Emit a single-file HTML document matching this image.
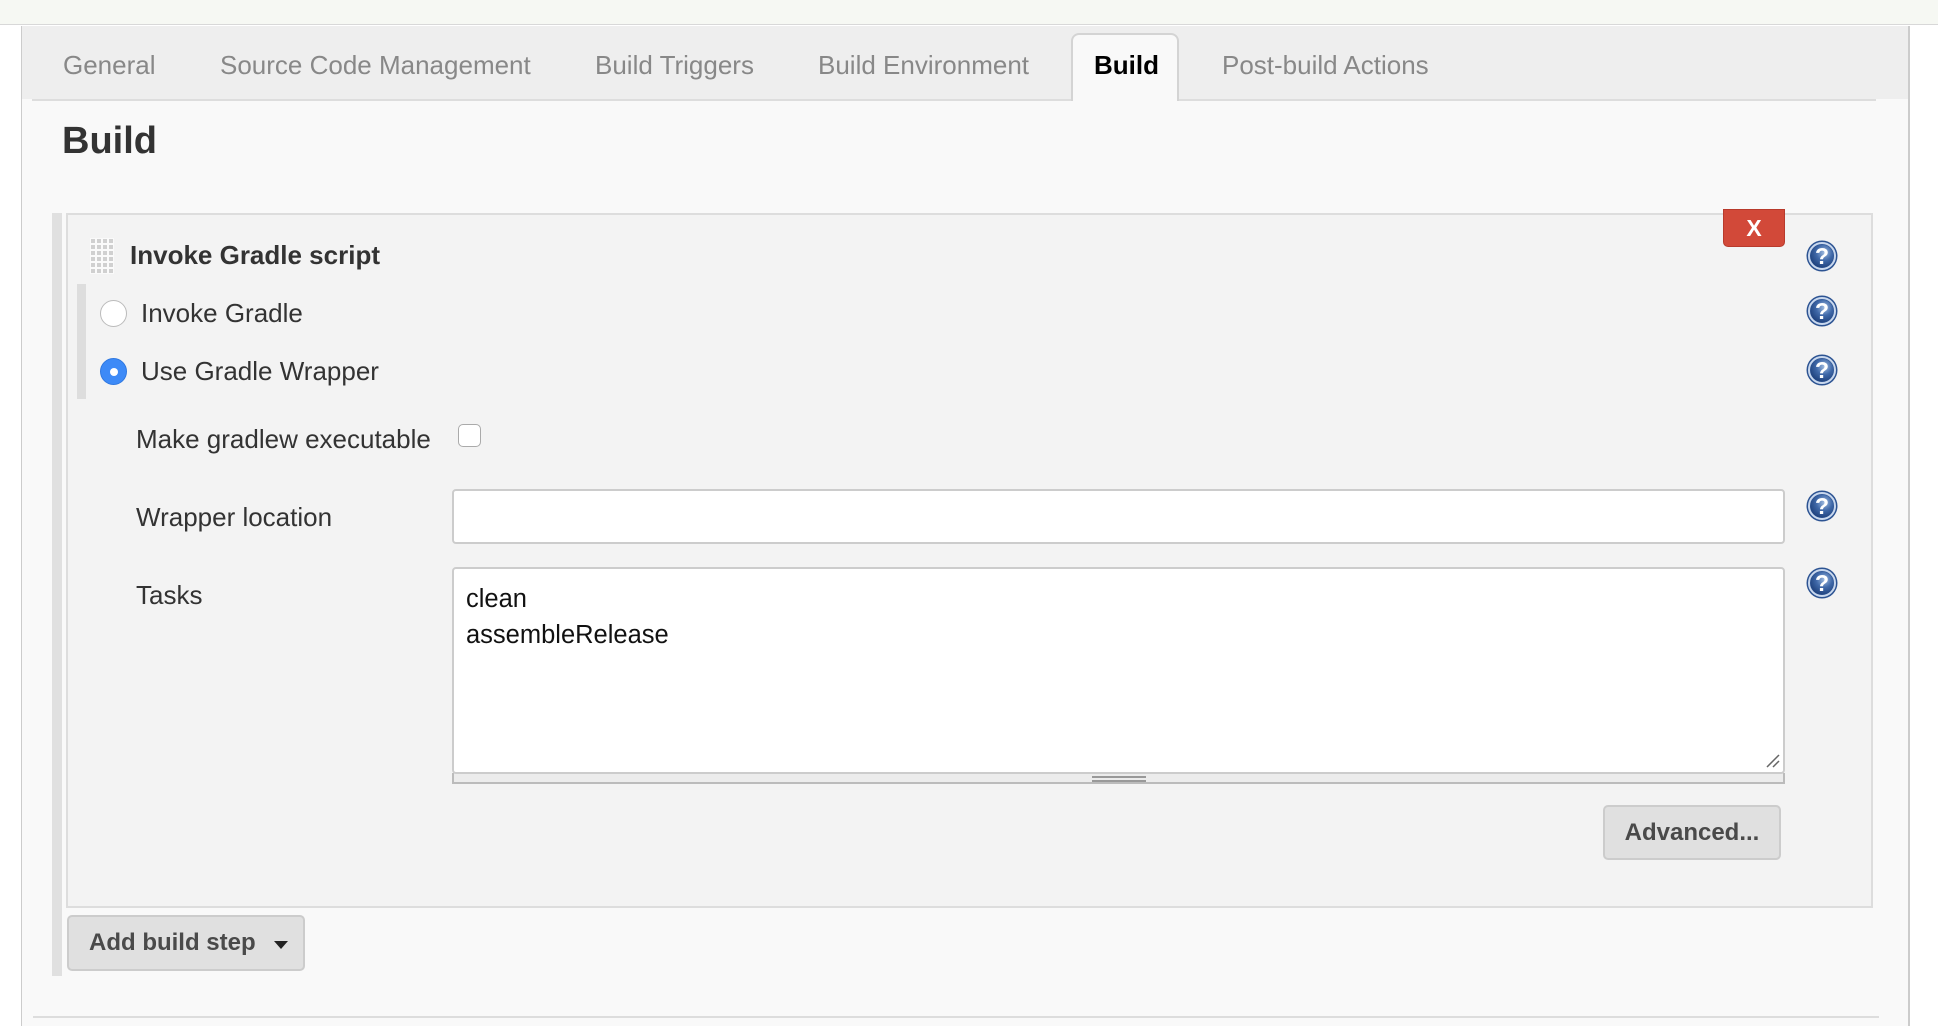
<!DOCTYPE html>
<html><head><meta charset="utf-8">
<style>
*{box-sizing:border-box;margin:0;padding:0}
body{width:1938px;height:1026px;position:relative;background:#fff;font-family:"Liberation Sans",Arial,sans-serif;overflow:hidden;color:#333}
.a{position:absolute}
.topbar{left:0;top:0;width:1938px;height:25px;background:#f6f8f3;border-bottom:1px solid #d8d8d8}
.page{left:21px;top:26px;width:1889px;height:1000px;background:#f9f9f9;border-left:1px solid #ccc;border-right:2px solid #ccc}
.tabbar{left:22px;top:26px;width:1886px;height:73px;background:#eee}
.tabline{left:32px;top:99px;width:1844px;height:2px;background:#ddd}
.tab{top:50px;font-size:26px;color:#888;line-height:30px;white-space:nowrap}
.acttab{left:1071px;top:33px;width:108px;height:68px;background:#f9f9f9;border:2px solid #d4d4d4;border-bottom:none;border-radius:8px 8px 0 0}
h1{position:absolute;left:62px;top:119px;font-size:38px;font-weight:bold;color:#333;line-height:44px}
.obar{left:52px;top:213px;width:10px;height:763px;background:#e0e0e0}
.box{left:66px;top:213px;width:1807px;height:695px;background:#f3f3f3;border:2px solid #ddd}
.ibar{left:77px;top:284px;width:9px;height:115px;background:#ddd}
.lbl{font-size:26px;line-height:30px;color:#333;white-space:nowrap}
.xbtn{left:1723px;top:209px;width:62px;height:38px;background:#d24939;border:1px solid #b83a2c;border-radius:0 0 5px 5px;color:#fff;font-weight:bold;font-size:23px;text-align:center;line-height:36px}
.help{position:absolute;width:32px;height:32px}
.radio{width:27px;height:27px;border-radius:50%}
.input{background:#fff;border:2px solid #ccc;border-radius:4px}
.btn{background:#e0e0e0;border:2px solid #ccc;border-radius:5px;font-weight:bold;font-size:24px;color:#4a4a4a;line-height:52px}
</style></head><body>
<div class="a topbar"></div>
<div class="a page"></div>
<div class="a tabbar"></div>
<div class="a tabline"></div>
<div class="a acttab"></div>
<div class="a tab" style="left:63px">General</div>
<div class="a tab" style="left:220px">Source Code Management</div>
<div class="a tab" style="left:595px">Build Triggers</div>
<div class="a tab" style="left:818px">Build Environment</div>
<div class="a tab" style="left:1094px;color:#000;font-weight:bold">Build</div>
<div class="a tab" style="left:1222px">Post-build Actions</div>
<h1>Build</h1>
<div class="a obar"></div>
<div class="a box"></div>
<div class="a xbtn">X</div>
<svg class="a" style="left:90px;top:238px" width="24" height="36">
<defs><pattern id="p" width="6" height="6" patternUnits="userSpaceOnUse"><rect x="1" y="1" width="4" height="4" fill="#d0d0d0"/></pattern></defs>
<rect width="24" height="36" fill="#fafafa"/><rect width="24" height="36" fill="url(#p)"/></svg>
<div class="a lbl" style="left:130px;top:240px;font-size:26px;font-weight:bold;color:#333">Invoke Gradle script</div>
<div class="a ibar"></div>
<div class="a radio" style="left:100px;top:300px;background:#fff;border:1px solid #bbb"></div>
<div class="a lbl" style="left:141px;top:298px">Invoke Gradle</div>
<div class="a radio" style="left:100px;top:358px;background:#3d8af7;border:1px solid #2f78e0"><div style="position:absolute;left:9px;top:9px;width:8px;height:8px;border-radius:50%;background:#fff"></div></div>
<div class="a lbl" style="left:141px;top:356px">Use Gradle Wrapper</div>
<div class="a lbl" style="left:136px;top:424px">Make gradlew executable</div>
<div class="a" style="left:458px;top:424px;width:23px;height:23px;background:#fff;border:1px solid #aaa;border-radius:5px"></div>
<div class="a lbl" style="left:136px;top:502px">Wrapper location</div>
<div class="a input" style="left:452px;top:489px;width:1333px;height:55px"></div>
<div class="a lbl" style="left:136px;top:580px">Tasks</div>
<div class="a" style="left:452px;top:773px;width:1333px;height:11px;background:#ececec;border:2px solid #bbb;border-top:none"></div>
<div class="a" style="left:1092px;top:776px;width:54px;height:2px;background:#999"></div>
<div class="a" style="left:1092px;top:780px;width:54px;height:2px;background:#999"></div>
<div class="a input" style="left:452px;top:567px;width:1333px;height:207px;font-size:25.5px;line-height:36px;color:#111;padding:12px 0 0 12px">clean<br>assembleRelease</div>
<svg class="a" style="left:1765px;top:753px" width="16" height="16"><path d="M2 14L14 2M8 14L14 8" stroke="#666" stroke-width="1.5"/></svg>
<div class="a btn" style="left:1603px;top:805px;width:178px;height:55px;text-align:center">Advanced...</div>
<div class="a btn" style="left:67px;top:915px;width:238px;height:56px;padding-left:20px">Add build step<span style="position:absolute;left:205px;top:24px;width:0;height:0;border-left:7px solid transparent;border-right:7px solid transparent;border-top:8px solid #222"></span></div>
<div class="a" style="left:33px;top:1016px;width:1846px;height:2px;background:#ddd"></div>
<svg width="0" height="0" style="position:absolute"><defs><radialGradient id="g" cx="0.6" cy="0.35" r="0.7"><stop offset="0" stop-color="#9fbbe0"/><stop offset="0.5" stop-color="#3f68a8"/><stop offset="1" stop-color="#1d3f7a"/></radialGradient></defs></svg>
<svg class="help" style="left:1806px;top:240px" viewBox="0 0 32 32"><circle cx="16" cy="16" r="15.5" fill="#2c5392"/><circle cx="16" cy="16" r="13" fill="none" stroke="#c9d8ee" stroke-width="2"/><circle cx="16" cy="16" r="11.5" fill="url(#g)"/><text x="16" y="24" text-anchor="middle" font-family="Liberation Sans" font-weight="bold" font-size="23" fill="#fff">?</text></svg>
<svg class="help" style="left:1806px;top:295px" viewBox="0 0 32 32"><circle cx="16" cy="16" r="15.5" fill="#2c5392"/><circle cx="16" cy="16" r="13" fill="none" stroke="#c9d8ee" stroke-width="2"/><circle cx="16" cy="16" r="11.5" fill="url(#g)"/><text x="16" y="24" text-anchor="middle" font-family="Liberation Sans" font-weight="bold" font-size="23" fill="#fff">?</text></svg>
<svg class="help" style="left:1806px;top:354px" viewBox="0 0 32 32"><circle cx="16" cy="16" r="15.5" fill="#2c5392"/><circle cx="16" cy="16" r="13" fill="none" stroke="#c9d8ee" stroke-width="2"/><circle cx="16" cy="16" r="11.5" fill="url(#g)"/><text x="16" y="24" text-anchor="middle" font-family="Liberation Sans" font-weight="bold" font-size="23" fill="#fff">?</text></svg>
<svg class="help" style="left:1806px;top:490px" viewBox="0 0 32 32"><circle cx="16" cy="16" r="15.5" fill="#2c5392"/><circle cx="16" cy="16" r="13" fill="none" stroke="#c9d8ee" stroke-width="2"/><circle cx="16" cy="16" r="11.5" fill="url(#g)"/><text x="16" y="24" text-anchor="middle" font-family="Liberation Sans" font-weight="bold" font-size="23" fill="#fff">?</text></svg>
<svg class="help" style="left:1806px;top:567px" viewBox="0 0 32 32"><circle cx="16" cy="16" r="15.5" fill="#2c5392"/><circle cx="16" cy="16" r="13" fill="none" stroke="#c9d8ee" stroke-width="2"/><circle cx="16" cy="16" r="11.5" fill="url(#g)"/><text x="16" y="24" text-anchor="middle" font-family="Liberation Sans" font-weight="bold" font-size="23" fill="#fff">?</text></svg>
</body></html>
